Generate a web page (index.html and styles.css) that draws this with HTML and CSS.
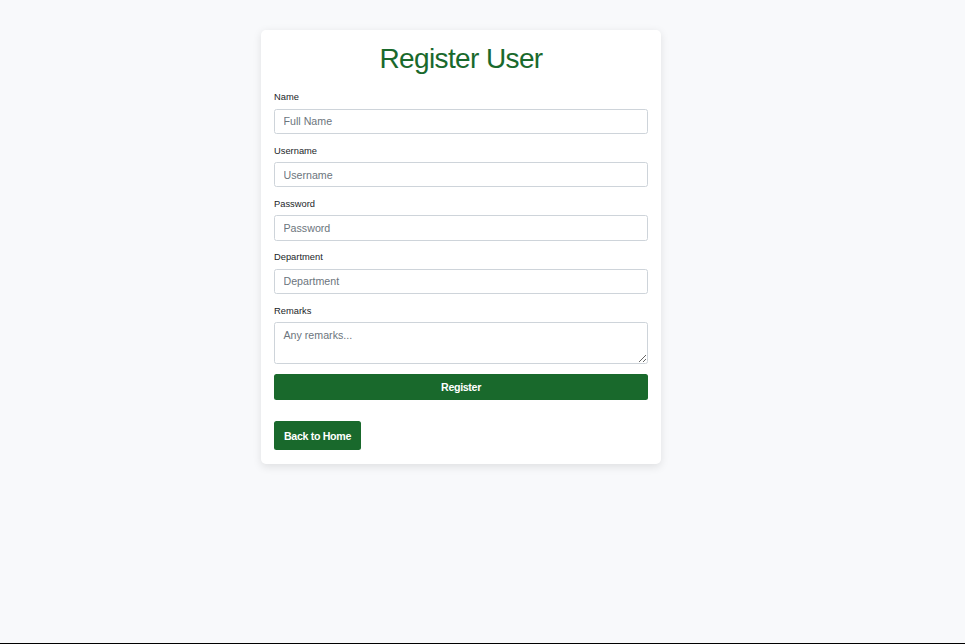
FILE: index.html
```html
<!DOCTYPE html>
<html lang="en">
<head>
<meta charset="utf-8">
<title>Register User</title>
<link rel="stylesheet" href="styles.css">
</head>
<body>
<main class="card">
<h1 class="title">Register User</h1>
<form>
<div class="field name"><label for="name">Name</label><input id="name" type="text" placeholder="Full Name"></div>
<div class="field username"><label for="username">Username</label><input id="username" type="text" placeholder="Username"></div>
<div class="field password"><label for="password">Password</label><input id="password" type="password" placeholder="Password"></div>
<div class="field department"><label for="department">Department</label><input id="department" type="text" placeholder="Department"></div>
<div class="field remarks"><label for="remarks">Remarks</label><textarea id="remarks" placeholder="Any remarks..."></textarea></div>
<button class="register" type="submit">Register</button>
</form>
<a class="home" href="#">Back to Home</a>
</main>
</body>
</html>
```

FILE: styles.css
```css
* { box-sizing: border-box; }
body {
  margin: 0;
  height: 644px;
  padding-top: 30px;
  padding-right: 43px;
  background: #f8f9fb;
  border-bottom: 1px solid #000;
  font-family: "Liberation Sans", Arial, sans-serif;
  color: #212529;
  overflow: hidden;
}
.card {
  width: 400px;
  height: 434px;
  margin: 0 auto;
  padding: 13px;
  background: #fff;
  border-radius: 5px;
  box-shadow: 0 2.67px 8px rgba(0, 0, 0, .1);
}
.title {
  margin: 0 0 12px;
  font-size: 28px;
  line-height: 32px;
  font-weight: 400;
  letter-spacing: -.62px;
  text-align: center;
  color: #19692c;
}
.field { height: 53px; padding-top: 4px; }
.username, .password, .remarks { padding-top: 5px; }
label { display: block; height: 18px; font-size: 9.33px; line-height: 12px; }
.username label, .password label, .remarks label { height: 17px; }
.password { height: 54px; }
.remarks { height: auto; }
input, textarea {
  display: block;
  width: 100%;
  height: 25px;
  margin: 0;
  padding: 4px 8.5px;
  border: 1px solid #ced4da;
  border-radius: 2.5px;
  font: 10.67px/16px "Liberation Sans", Arial, sans-serif;
}
.name input, .department input { padding-top: 3px; padding-bottom: 5px; }
.password input { height: 26px; }
textarea { height: 42px; resize: vertical; }
::placeholder { color: #6c757d; }
.register, .home {
  border: 0;
  border-radius: 2.5px;
  background: #19692c;
  color: #fff;
  font: 700 10.67px/16px "Liberation Sans", Arial, sans-serif;
  letter-spacing: -.34px;
}
.register { display: block; width: 100%; height: 26px; margin: 10px 0 21px; padding: 0; }
.home { display: inline-block; width: 87px; height: 29px; padding: 7px 0 6px 10px; text-decoration: none; }
```
